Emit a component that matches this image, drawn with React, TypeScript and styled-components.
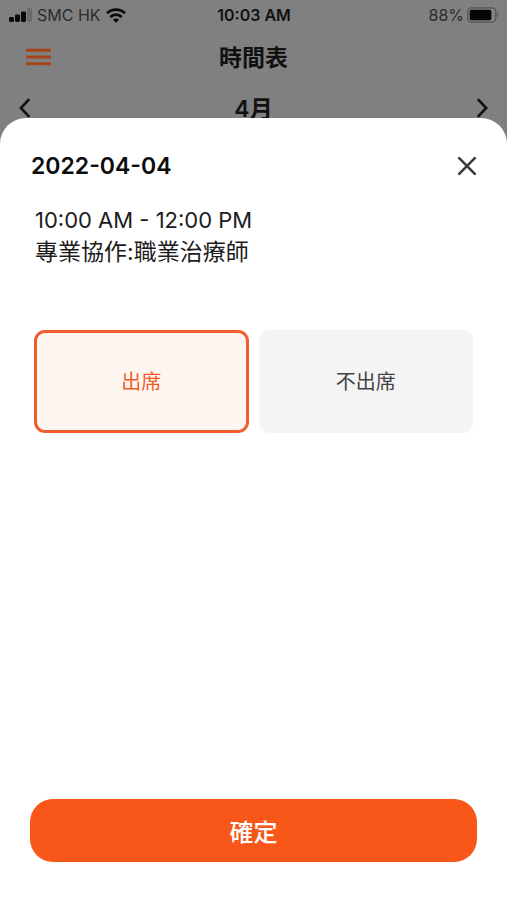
import React, { useState } from "react";
import styled, { createGlobalStyle } from "styled-components";

const GlobalStyle = createGlobalStyle`
  *, *::before, *::after { box-sizing: border-box; }
  body {
    margin: 0;
    background: #808080;
    color: #111;
    font-family: Inter, "Noto Sans CJK TC", sans-serif;
  }
  button { font: inherit; color: inherit; border: 0; background: none; padding: 0; cursor: pointer; }
`;

const Screen = styled.div`
  position: relative;
  min-height: 100vh;
  overflow: hidden;
`;

const StatusBar = styled.div`
  display: grid;
  grid-template-columns: 1fr auto 1fr;
  align-items: center;
  height: 30px;
  padding: 0 8px 0 9px;
  font-size: 16px;
  line-height: 20px;
  color: #2c2c2c;
`;

const StatusGroup = styled.div<{ $end?: boolean }>`
  display: flex;
  align-items: center;
  justify-content: ${(p) => (p.$end ? "flex-end" : "flex-start")};
  gap: ${(p) => (p.$end ? 3 : 5)}px;
`;

const Clock = styled.time`
  font-weight: 600;
  color: #111;
`;

const Bar = styled.header<{ $height: number; $inset: number }>`
  display: grid;
  grid-template-columns: 1fr auto 1fr;
  align-items: center;
  height: ${(p) => p.$height}px;
  padding: 0 ${(p) => p.$inset}px;
`;

const BarTitle = styled.h1`
  margin: 0;
  padding-top: 2px;
  font-size: 23px;
  line-height: 32px;
  font-weight: 600;
`;

const IconButton = styled.button<{ $end?: boolean }>`
  display: flex;
  justify-self: ${(p) => (p.$end ? "end" : "start")};
`;

const Overlay = styled.div`
  position: absolute;
  inset: 0;
  display: flex;
  padding-top: 118px;
`;

const Sheet = styled.form`
  flex: 1;
  display: flex;
  flex-direction: column;
  padding: 31px 30px 38px;
  border-radius: 26px 26px 0 0;
  background: #fff;
`;

const SheetHeader = styled.div`
  display: flex;
  align-items: center;
  justify-content: space-between;
`;

const SheetDate = styled.h2`
  margin: 0 0 0 1px;
  font-size: 23px;
  line-height: 34px;
  font-weight: 600;
  color: #0c0c0c;
`;

const Details = styled.p`
  margin: 21px 5px 0;
  font-size: 22px;
  line-height: 32px;
  color: #1c1c1c;
`;

const DetailLine = styled.span<{ $size: number }>`
  display: block;
  font-size: ${(p) => p.$size}px;
`;

const Choices = styled.fieldset`
  display: grid;
  grid-template-columns: 1fr 1fr;
  gap: 10px;
  margin: 62px 4px 0;
  padding: 0;
  border: 0;
`;

const Choice = styled.label`
  position: relative;
  display: flex;
  align-items: center;
  justify-content: center;
  height: 103px;
  border: 3px solid #f4f4f4;
  border-radius: 11px;
  background: #f4f4f4;
  color: #444;
  font-size: 20px;
  line-height: 30px;
  cursor: pointer;

  &:has(input:checked) {
    border-color: #f15c2b;
    background: #fdf6f0;
    color: #f15c2b;
  }
`;

const ChoiceInput = styled.input`
  position: absolute;
  inset: 0;
  margin: 0;
  opacity: 0;
  cursor: pointer;
`;

const ConfirmButton = styled.button`
  height: 63px;
  margin-top: auto;
  border-radius: 23px;
  && {
    padding-top: 4px;
    background: #f95719;
    color: #fff;
    font-size: 24px;
    line-height: 34px;
    font-weight: 500;
  }
`;

const SignalIcon = () => (
  <svg width="23" height="14" viewBox="0 0 23 14" aria-hidden="true">
    <rect x="0" y="9" width="5" height="5" rx="1.4" fill="#0a0a0a" />
    <rect x="6" y="6.5" width="5" height="7.5" rx="1.4" fill="#0a0a0a" />
    <rect x="12" y="3.5" width="5" height="10.5" rx="1.4" fill="#0a0a0a" />
    <rect x="18" y="0" width="5" height="14" rx="1.4" fill="#6c6c6c" />
  </svg>
);

const WifiIcon = () => (
  <svg width="20" height="15" viewBox="0 0 20 15" fill="none" stroke="#0a0a0a" strokeWidth="2.8" aria-hidden="true">
    <path d="M1 5.3C6 .5 14 .5 19 5.3" />
    <path d="M4.3 8.9c3.3-3.1 8.1-3.1 11.4 0" />
    <path d="M6.8 11.6c1.9-1.6 4.5-1.6 6.4 0L10 14.8z" fill="#0a0a0a" stroke="none" />
  </svg>
);

const BatteryIcon = () => (
  <svg width="32" height="16" viewBox="0 0 32 16" aria-hidden="true">
    <rect x="0.8" y="0.8" width="28" height="14.4" rx="4" fill="none" stroke="#555" strokeWidth="1.3" />
    <rect x="2.7" y="2.7" width="21.6" height="10.6" rx="2" fill="#050505" />
    <path d="M30.4 5.6c1.5.6 1.5 4.2 0 4.8z" fill="#555" />
  </svg>
);

const MenuIcon = () => (
  <svg width="25" height="18" viewBox="0 0 25 18" stroke="#a7431b" strokeWidth="3" aria-hidden="true">
    <path d="M0 2.3h25M0 9h25M0 15.7h25" />
  </svg>
);

const ChevronIcon = ({ right }: { right?: boolean }) => (
  <svg width="12" height="20" viewBox="0 0 12 20" fill="none" stroke="#111" strokeWidth="2.6" aria-hidden="true">
    <path d={right ? "M1.8 1.2 10.2 10 1.8 18.8" : "M10.3 1.2 1.9 10l8.4 8.8"} />
  </svg>
);

const CloseIcon = () => (
  <svg width="20" height="20" viewBox="0 0 20 20" stroke="#3a3a3a" strokeWidth="2.6" strokeLinecap="round" aria-hidden="true">
    <path d="m2.2 2.2 15.6 15.6M17.8 2.2 2.2 17.8" />
  </svg>
);

const options = [
  { value: "present", label: "出席" },
  { value: "absent", label: "不出席" },
];

export default function App() {
  const [attendance, setAttendance] = useState("present");

  return (
    <Screen>
      <GlobalStyle />
      <StatusBar>
        <StatusGroup>
          <SignalIcon />
          <span>SMC HK</span>
          <WifiIcon />
        </StatusGroup>
        <Clock>10:03 AM</Clock>
        <StatusGroup $end>
          <span>88%</span>
          <BatteryIcon />
        </StatusGroup>
      </StatusBar>
      <Bar $height={54} $inset={26}>
        <IconButton aria-label="選單"><MenuIcon /></IconButton>
        <BarTitle>時間表</BarTitle>
      </Bar>
      <Bar as="nav" $height={48} $inset={19}>
        <IconButton aria-label="上個月"><ChevronIcon /></IconButton>
        <BarTitle as="h2">4月</BarTitle>
        <IconButton $end aria-label="下個月"><ChevronIcon right /></IconButton>
      </Bar>

      <Overlay>
        <Sheet role="dialog" aria-label="2022-04-04" onSubmit={(e: React.FormEvent) => e.preventDefault()}>
          <SheetHeader>
            <SheetDate>2022-04-04</SheetDate>
            <IconButton type="button" $end aria-label="關閉"><CloseIcon /></IconButton>
          </SheetHeader>
          <Details>
            <DetailLine $size={22}>10:00 AM - 12:00 PM</DetailLine>
            <DetailLine $size={23}>專業協作:職業治療師</DetailLine>
          </Details>
          <Choices aria-label="出席狀況">
            {options.map((o) => (
              <Choice key={o.value}>
                <ChoiceInput
                  type="radio"
                  name="attendance"
                  value={o.value}
                  checked={attendance === o.value}
                  onChange={() => setAttendance(o.value)}
                />
                {o.label}
              </Choice>
            ))}
          </Choices>
          <ConfirmButton type="submit">確定</ConfirmButton>
        </Sheet>
      </Overlay>
    </Screen>
  );
}
